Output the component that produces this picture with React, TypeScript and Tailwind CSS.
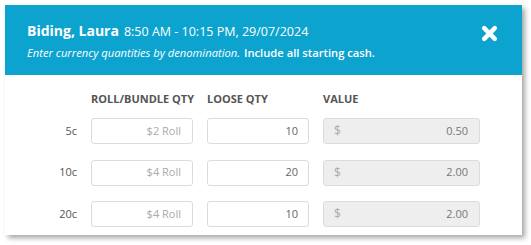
import React from "react";

const rows = [
  { label: "5c", roll: "$2 Roll", loose: "10", value: "0.50" },
  { label: "10c", roll: "$4 Roll", loose: "20", value: "2.00" },
  { label: "20c", roll: "$4 Roll", loose: "10", value: "2.00" },
];

export default function App() {
  return (
    <div className="w-[531px] h-[245px] bg-white pl-[5px] pt-[5px]" style={{ fontFamily: '"Open Sans", sans-serif' }}>
      <div className="w-[517px] h-[230px] bg-white shadow-[3px_3px_5px_rgba(0,0,0,0.35)] flex flex-col">
        <div className="h-[70px] bg-[#0ca3cf] text-white pl-[22px] pr-[24px] pt-[15px] flex justify-between">
          <div>
            <div className="flex items-baseline">
              <span className="text-[14px] font-bold">Biding, Laura</span>
              <span className="text-[12.5px] ml-[5px]">8:50 AM - 10:15 PM, 29/07/2024</span>
            </div>
            <div className="text-[11.2px] mt-[3px]">
              <span className="italic">Enter currency quantities by denomination.</span>
              <span className="font-semibold ml-[4px]">Include all starting cash.</span>
            </div>
          </div>
          <svg width="17" height="17" viewBox="0 0 16 16" className="mt-[5px]">
            <path d="M3 3 L13 13 M13 3 L3 13" stroke="white" strokeWidth="4.2" strokeLinecap="round" />
          </svg>
        </div>
        <div className="pt-[14px]">
          <div className="flex text-[11px] font-bold text-[#555] h-[20px] items-center">
            <div className="w-[86px]" />
            <div className="w-[116px]">ROLL/BUNDLE QTY</div>
            <div className="w-[116px]">LOOSE QTY</div>
            <div>VALUE</div>
          </div>
          <div className="flex flex-col gap-[15.5px] mt-[9px]">
            {rows.map((r) => (
              <div key={r.label} className="flex items-center h-[26px]">
                <div className="w-[72px] text-right text-[11px] text-[#555]">{r.label}</div>
                <div className="w-[14px]" />
                <div className="w-[102px] h-[26px] border border-[#dcdce0] rounded-[3px] text-[11px] text-[#aaa] text-right pr-[11px] flex items-center justify-end">{r.roll}</div>
                <div className="w-[14px]" />
                <div className="w-[102px] h-[26px] border border-[#dcdce0] rounded-[3px] text-[11px] text-[#666] text-right pr-[10px] flex items-center justify-end">{r.loose}</div>
                <div className="w-[14px]" />
                <div className="w-[157px] h-[26px] border border-[#dcdce0] bg-[#eeeeee] rounded-[3px] text-[11px] flex items-center justify-between pl-[10px] pr-[11px]">
                  <span className="text-[#aaa] text-[12px]">$</span>
                  <span className="text-[#777]">{r.value}</span>
                </div>
              </div>
            ))}
          </div>
        </div>
      </div>
    </div>
  );
}
